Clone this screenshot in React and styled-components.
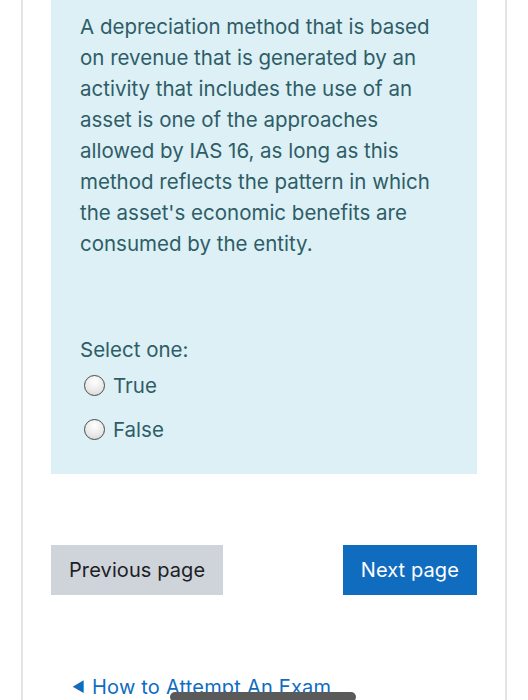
import styled, { createGlobalStyle } from "styled-components";

const Global = createGlobalStyle`
  html, body {
    margin: 0;
    padding: 0;
    background: #fff;
  }
  body {
    font-family: Inter, "Liberation Sans", sans-serif;
    overflow: hidden;
  }
`;

const Page = styled.div`
  position: relative;
  width: 528px;
  height: 700px;
  overflow: hidden;
  background: #fff;
`;

const Card = styled.div`
  margin: 0 21px 0 21px;
  border-left: 2px solid #e4e4e4;
  border-right: 2px solid #e4e4e4;
  padding: 0 28px 0 28px;
  height: 700px;
  box-sizing: border-box;
`;

const InfoBox = styled.div`
  background: #dcf0f6;
  padding: 11px 29px 0 29px;
  height: 474px;
  box-sizing: border-box;
  color: #2f5d66;
  font-size: 20.5px;
  line-height: 31px;
`;

const Question = styled.p`
  margin: 0;
`;

const Prompt = styled.div`
  margin-top: 75px;
`;

const Options = styled.div`
  display: flex;
  flex-direction: column;
  gap: 13px;
  margin-top: 5px;
  padding-left: 4px;
`;

const Option = styled.label`
  display: flex;
  align-items: center;
  gap: 8px;
`;

const Radio = styled.span`
  width: 19px;
  height: 19px;
  border-radius: 50%;
  border: 1.5px solid #4a4a4a;
  background: radial-gradient(circle at 50% 30%, #ffffff 0%, #e8e8e8 60%, #cfcfcf 100%);
  flex-shrink: 0;
`;

const Buttons = styled.div`
  display: flex;
  justify-content: space-between;
  margin-top: 71px;
`;

const Button = styled.button`
  height: 50px;
  border: none;
  border-radius: 0;
  padding: 0 18px;
  font-family: Inter, "Liberation Sans", sans-serif;
  font-size: 20px;
  letter-spacing: 0.1px;
  background: ${(p) => (p.primary ? "#0f6cbf" : "#ced4da")};
  color: ${(p) => (p.primary ? "#fff" : "#1d2125")};
`;

const BackLink = styled.a`
  display: flex;
  align-items: center;
  gap: 7px;
  margin-top: 80px;
  margin-left: 21px;
  font-size: 20px;
  letter-spacing: 0.2px;
  color: #0f6cbf;
  text-decoration: none;
  line-height: 24px;
`;

const Arrow = styled.span`
  font-size: 14px;
`;

const HomeBar = styled.div`
  position: absolute;
  left: 170px;
  top: 692px;
  width: 186px;
  height: 10px;
  border-radius: 5px;
  background: #5a5a5a;
`;

export default function App() {
  return (
    <Page>
      <Global />
      <Card>
        <InfoBox>
          <Question>
            A depreciation method that is based on revenue that is generated by an
            activity that includes the use of an asset is one of the approaches
            allowed by IAS 16, as long as this method reflects the pattern in which
            the asset's economic benefits are consumed by the entity.
          </Question>
          <Prompt>Select one:</Prompt>
          <Options>
            <Option>
              <Radio />
              True
            </Option>
            <Option>
              <Radio />
              False
            </Option>
          </Options>
        </InfoBox>
        <Buttons>
          <Button>Previous page</Button>
          <Button primary>Next page</Button>
        </Buttons>
        <BackLink href="#">
          <Arrow>◀</Arrow>
          How to Attempt An Exam
        </BackLink>
      </Card>
      <HomeBar />
    </Page>
  );
}
